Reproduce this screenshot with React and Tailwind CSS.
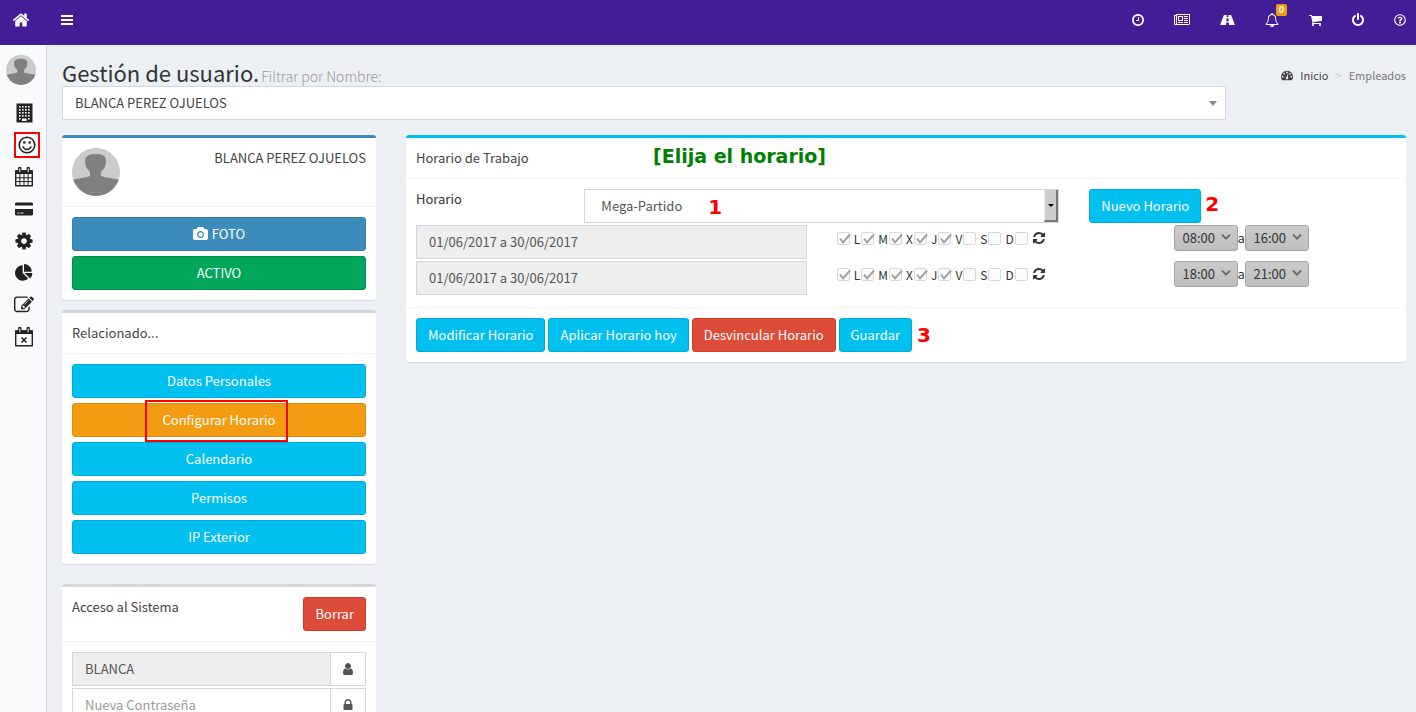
import { useState } from "react";
import { FaRegQuestionCircle } from "react-icons/fa";

const topIcons = [
  {
    name: "Fichajes",
    box: "128 0 1536 1792",
    size: "w-3",
    d: "M1024 544v448q0 14-9 23t-23 9h-320q-14 0-23-9t-9-23v-64q0-14 9-23t23-9h224v-352q0-14 9-23t23-9h64q14 0 23 9t9 23zm416 352q0-148-73-273t-198-198-273-73-273 73-198 198-73 273 73 273 198 198 273 73 273-73 198-198 73-273zm224 0q0 209-103 385.5t-279.5 279.5-385.5 103-385.5-103-279.5-279.5-103-385.5 103-385.5 279.5-279.5 385.5-103 385.5 103 279.5 279.5 103 385.5z",
  },
  {
    name: "Noticias",
    box: "0 0 2048 1792",
    size: "w-4",
    d: "M1024 512h-384v384h384v-384zm128 640v128h-640v-128h640zm0-768v640h-640v-640h640zm640 768v128h-512v-128h512zm0-256v128h-512v-128h512zm0-256v128h-512v-128h512zm0-256v128h-512v-128h512zm-1536 960v-960h-128v960q0 26 19 45t45 19 45-19 19-45zm1664 0v-1088h-1536v1088q0 33-11 64h1483q26 0 45-19t19-45zm128-1216v1216q0 80-56 136t-136 56h-1664q-80 0-136-56t-56-136v-1088h256v-128h1792z",
  },
  {
    name: "Rutas",
    box: "0 0 1920 1792",
    size: "w-[15px]",
    d: "M1111 1025v-4l-24-320q-1-13-11-22.5t-23-9.5h-186q-13 0-23 9.5t-11 22.5l-24 320v4q-1 12 8 20t21 8h244q12 0 21-8t8-20zm759 438q0 73-46 73h-704q13 0 22-9.5t8-22.5l-20-256q-1-13-11-22.5t-23-9.5h-272q-13 0-23 9.5t-11 22.5l-20 256q-1 13 8 22.5t22 9.5h-704q-46 0-46-73 0-54 26-116l417-1044q8-19 26-33t38-14h339q-13 0-23 9.5t-11 22.5l-15 192q-1 14 8 23t22 9h166q13 0 22-9t8-23l-15-192q-1-13-11-22.5t-23-9.5h339q20 0 38 14t26 33l417 1044q26 62 26 116z",
  },
  {
    name: "Avisos",
    box: "0 0 1792 1792",
    size: "w-3.5",
    badge: "0",
    d: "M912 1696q0-16-16-16-59 0-101.5-42.5t-42.5-101.5q0-16-16-16t-16 16q0 73 51.5 124.5t124.5 51.5q16 0 16-16zm-666-288h1300q-266-300-266-832 0-51-24-105t-69-103-121.5-80.5-169.5-31.5-169.5 31.5-121.5 80.5-69 103-24 105q0 532-266 832zm1482 0q0 52-38 90t-90 38h-448q0 106-75 181t-181 75-181-75-75-181h-448q-52 0-90-38t-38-90q50-42 91-88t85-119.5 74.5-158.5 50-206 19.5-260q0-152 117-282.5t307-158.5q-8-19-8-39 0-40 28-68t68-28 68 28 28 68q0 20-8 39 190 28 307 158.5t117 282.5q0 139 19.5 260t50 206 74.5 158.5 85 119.5 91 88z",
  },
  {
    name: "Carrito",
    box: "64 0 1664 1792",
    size: "w-[13px]",
    d: "M704 1536q0 52-38 90t-90 38-90-38-38-90 38-90 90-38 90 38 38 90zm896 0q0 52-38 90t-90 38-90-38-38-90 38-90 90-38 90 38 38 90zm128-1088v512q0 24-16.5 42.5t-40.5 21.5l-1044 122q13 60 13 70 0 16-24 64h920q26 0 45 19t19 45-19 45-45 19h-1024q-26 0-45-19t-19-45q0-11 8-31.5t16-36 21.5-40 15.5-29.5l-177-823h-204q-26 0-45-19t-19-45 19-45 45-19h256q16 0 28.5 6.5t19.5 15.5 13 24.5 8 26 5.5 29.5 4.5 26h1201q26 0 45 19t19 45z",
  },
  {
    name: "Salir",
    box: "128 0 1536 1792",
    size: "w-3",
    d: "M1664 896q0 156-61 298t-164 245-245 164-298 61-298-61-245-164-164-245-61-298q0-182 80.5-343t226.5-270q43-32 95.5-25t83.5 50q32 42 24.5 94.5t-49.5 84.5q-98 74-151.5 181t-53.5 228q0 104 40.5 198.5t109.5 163.5 163.5 109.5 198.5 40.5 198.5-40.5 163.5-109.5 109.5-163.5 40.5-198.5q0-121-53.5-228t-151.5-181q-42-32-49.5-84.5t24.5-94.5q31-43 84-50t95 25q146 109 226.5 270t80.5 343zm-640-768v640q0 52-38 90t-90 38-90-38-38-90v-640q0-52 38-90t90-38 90 38 38 90z",
  },
];

const HOME =
  "M1472 992v480q0 26-19 45t-45 19h-384v-384h-256v384h-384q-26 0-45-19t-19-45v-480q0-1 .5-3t.5-3l575-474 575 474q1 2 1 6zm223-69l-62 74q-8 9-21 11h-3q-13 0-21-7l-692-577-692 577q-12 8-24 7-13-2-21-11l-62-74q-8-10-7-23.5t11-21.5l719-599q32-26 76-26t76 26l244 204v-195q0-14 9-23t23-9h192q14 0 23 9t9 23v408l219 182q10 8 11 21.5t-7 23.5z";
const GAUGE =
  "M384 1152q0-53-37.5-90.5t-90.5-37.5-90.5 37.5-37.5 90.5 37.5 90.5 90.5 37.5 90.5-37.5 37.5-90.5zm192-448q0-53-37.5-90.5t-90.5-37.5-90.5 37.5-37.5 90.5 37.5 90.5 90.5 37.5 90.5-37.5 37.5-90.5zm428 481l101-382q6-26-7.5-48.5t-38.5-29.5-48 6.5-30 39.5l-101 382q-60 5-107 43.5t-63 98.5q-20 77 20 146t117 89 146-20 89-117q16-60-6-117t-72-91zm660-33q0-53-37.5-90.5t-90.5-37.5-90.5 37.5-37.5 90.5 37.5 90.5 90.5 37.5 90.5-37.5 37.5-90.5zm-640-640q0-53-37.5-90.5t-90.5-37.5-90.5 37.5-37.5 90.5 37.5 90.5 90.5 37.5 90.5-37.5 37.5-90.5zm448 192q0-53-37.5-90.5t-90.5-37.5-90.5 37.5-37.5 90.5 37.5 90.5 90.5 37.5 90.5-37.5 37.5-90.5zm320 448q0 261-141 483-19 29-54 29h-1402q-35 0-54-29-141-221-141-483 0-182 71-348t191-286 286-191 348-71 348 71 286 191 191 286 71 348z";
const REFRESH =
  "M1639 1056q0 5-1 7-64 268-268 434.5t-478 166.5q-146 0-282.5-55t-243.5-157l-129 129q-19 19-45 19t-45-19-19-45v-448q0-26 19-45t45-19h448q26 0 45 19t19 45-19 45l-137 137q71 66 161 102t187 36q134 0 250-65t186-179q11-17 53-117 8-23 30-23h192q13 0 22.5 9.5t9.5 22.5zm25-800v448q0 26-19 45t-45 19h-448q-26 0-45-19t-19-45 19-45l138-138q-148-137-349-137-134 0-250 65t-186 179q-11 17-53 117-8 23-30 23h-199q-13 0-22.5-9.5t-9.5-22.5v-7q65-268 270-434.5t480-166.5q146 0 284 55.5t245 156.5l130-129q19-19 45-19t45 19 19 45z";
const CAMERA =
  "M960 672q119 0 203.5 84.5t84.5 203.5-84.5 203.5-203.5 84.5-203.5-84.5-84.5-203.5 84.5-203.5 203.5-84.5zm704-416q106 0 181 75t75 181v896q0 106-75 181t-181 75h-1408q-106 0-181-75t-75-181v-896q0-106 75-181t181-75h224l51-136q19-49 69.5-84.5t103.5-35.5h512q53 0 103.5 35.5t69.5 84.5l51 136h224zm-704 1152q185 0 316.5-131.5t131.5-316.5-131.5-316.5-316.5-131.5-316.5 131.5-131.5 316.5 131.5 316.5 316.5 131.5z";
const USER =
  "M1536 1399q0 109-62.5 187t-150.5 78h-854q-88 0-150.5-78t-62.5-187q0-85 8.5-160.5t31.5-152 58.5-131 94-89 134.5-34.5q131 128 313 128t313-128q76 0 134.5 34.5t94 89 58.5 131 31.5 152 8.5 160.5zm-256-887q0 159-112.5 271.5t-271.5 112.5-271.5-112.5-112.5-271.5 112.5-271.5 271.5-112.5 271.5 112.5 112.5 271.5z";
const LOCK =
  "M640 768h512v-192q0-106-75-181t-181-75-181 75-75 181v192zm832 96v576q0 40-28 68t-68 28h-960q-40 0-68-28t-28-68v-576q0-40 28-68t68-28h32v-192q0-184 132-316t316-132 316 132 132 316v192h32q40 0 68 28t28 68z";
const COG =
  "M1152 896q0-106-75-181t-181-75-181 75-75 181 75 181 181 75 181-75 75-181zm512-109v222q0 12-8 23t-20 13l-185 28q-19 54-39 91 35 50 107 138 10 12 10 25t-9 23q-27 37-99 108t-94 71q-12 0-26-9l-138-108q-44 23-91 38-16 136-29 186-7 28-36 28h-222q-14 0-24.5-8.5t-11.5-21.5l-28-184q-49-16-90-37l-141 107q-10 9-25 9-14 0-25-11-126-114-165-168-7-10-7-23 0-12 8-23 15-21 51-66.5t54-70.5q-27-50-41-99l-183-27q-13-2-21-12.5t-8-23.5v-222q0-12 8-23t19-13l186-28q14-46 39-92-40-57-107-138-10-12-10-24 0-10 9-23 26-36 98.5-107.5t94.5-71.5q13 0 26 10l138 107q44-23 91-38 16-136 29-186 7-28 36-28h222q14 0 24.5 8.5t11.5 21.5l28 184q49 16 90 37l142-107q9-9 24-9 13 0 25 10 129 119 165 170 7 8 7 22 0 12-8 23-15 21-51 66.5t-54 70.5q26 50 41 98l183 28q13 2 21 12.5t8 23.5z";
const PIE =
  "M768 890l546 546q-106 108-247.5 168t-298.5 60q-209 0-385.5-103t-279.5-279.5-103-385.5 103-385.5 279.5-279.5 385.5-103v762zm187 6h773q0 157-60 298.5t-168 247.5zm709-128h-768v-768q209 0 385.5 103t279.5 279.5 103 385.5z";
const EDIT =
  "M888 1184l116-116-152-152-116 116v56h96v96h56zm440-720q-16-16-33 1l-350 350q-17 17-1 33t33-1l350-350q17-17 1-33zm80 594v190q0 119-84.5 203.5t-203.5 84.5h-832q-119 0-203.5-84.5t-84.5-203.5v-832q0-119 84.5-203.5t203.5-84.5h832q63 0 117 25 15 7 18 23 3 17-9 29l-49 49q-14 14-32 8-23-6-45-6h-832q-66 0-113 47t-47 113v832q0 66 47 113t113 47h832q66 0 113-47t47-113v-126q0-13 9-22l64-64q15-15 35-7t20 29zm-96-738l288 288-672 672h-288v-288zm444 132l-92 92-288-288 92-92q28-28 68-28t68 28l152 152q28 28 28 68t-28 68z";

function Glyph({ d, box = "0 0 1792 1792", className = "size-3.5" }) {
  return (
    <svg viewBox={box} className={`shrink-0 ${className}`} fill="currentColor" aria-hidden="true">
      <path d={d} />
    </svg>
  );
}

function BuildingIcon() {
  const cols = [3, 6, 9, 12];
  const rows = [3, 6, 9, 12];
  return (
    <svg viewBox="0 0 17 20" className="h-5 w-[17px]" aria-hidden="true">
      <path d="M0.5 0.5h16v19h-16z" fill="currentColor" />
      {rows.map((y) =>
        cols.map((x) => <rect key={`${x}-${y}`} x={x} y={y} width="1.6" height="1.6" fill="#f9fafc" />)
      )}
      <rect x="3" y="15" width="1.6" height="1.6" fill="#f9fafc" />
      <rect x="12" y="15" width="1.6" height="1.6" fill="#f9fafc" />
      <rect x="6" y="15.5" width="4.6" height="2.5" fill="#f9fafc" />
    </svg>
  );
}

function SmileIcon() {
  return (
    <svg viewBox="0 0 18 18" className="size-[18px]" fill="none" stroke="currentColor" aria-hidden="true">
      <circle cx="9" cy="9" r="7.8" strokeWidth="1.6" />
      <path d="M5 10.8c.7 1.7 2.2 2.7 4 2.7s3.3-1 4-2.7" strokeWidth="1.4" strokeLinecap="round" />
      <circle cx="6.3" cy="6.5" r="1.3" fill="currentColor" stroke="none" />
      <circle cx="11.7" cy="6.5" r="1.3" fill="currentColor" stroke="none" />
    </svg>
  );
}

function CalendarIcon({ crossed }) {
  return (
    <svg viewBox="0 0 18 20" className="h-5 w-[18px]" fill="none" stroke="currentColor" aria-hidden="true">
      <path d="M0.7 4h16.6v14.7H0.7z" strokeWidth="1.4" strokeLinejoin="round" />
      <path d="M0.5 3.5h17V7h-17z" fill="currentColor" stroke="none" />
      <path d="M4.8 1.500v3.500M13.2 1.500v3.500" strokeWidth="3.4" strokeLinecap="round" />
      <path d="M4.8 1.800v3M13.2 1.800v3" stroke="#f9fafc" strokeWidth="1" strokeLinecap="round" />
      {crossed ? (
        <path d="M6.5 10.5l5 5M11.5 10.500l-5 5" strokeWidth="1.6" />
      ) : (
        <path d="M4.9 7v11.500M9 7v11.500M13.1 7v11.500M1 10.800h16M1 14.600h16" strokeWidth="1" />
      )}
    </svg>
  );
}

function CardIcon() {
  return (
    <svg viewBox="0 0 18 14" className="h-3.5 w-[18px]" fill="currentColor" aria-hidden="true">
      <path d="M1.5 0.5h15A1.500 1.500 0 0 1 18 2v1.500H0V2A1.500 1.500 0 0 1 1.500 0.500z" />
      <path d="M0 7h18v5a1.500 1.500 0 0 1-1.500 1.500h-15A1.500 1.500 0 0 1 0 12zM2.500 10.500v1h2v-1zM5.500 10.500v1h3v-1z" fillRule="evenodd" />
    </svg>
  );
}

function Avatar({ className }) {
  return (
    <svg viewBox="0 0 48 48" className={`shrink-0 rounded-full ${className}`} role="img" aria-label="Avatar">
      <path d="M0 0h48v48H0z" fill="#cbcbcb" />
      <path
        d="M24 6c-6 0-11 1.500-11 7 0 5 2 8.500 5 10.500V28c-5 2-11 2-18 4v16h48V32c-7-2-14-2-19-4v-4.500c3-2 5-5.500 5-10.500 0-5.500-4-7-10-7z"
        fill="#808080"
      />
    </svg>
  );
}

const menu = [
  { name: "Empresa", icon: <BuildingIcon /> },
  { name: "Empleados", icon: <SmileIcon />, marked: true },
  { name: "Calendario", icon: <CalendarIcon /> },
  { name: "Tarjetas", icon: <CardIcon /> },
  { name: "Ajustes", icon: <Glyph d={COG} className="size-5" /> },
  { name: "Informes", icon: <Glyph d={PIE} className="size-[18px]" /> },
  { name: "Editar", icon: <Glyph d={EDIT} className="size-5" /> },
  { name: "Ausencias", icon: <CalendarIcon crossed /> },
];

const tones = {
  info: "bg-[#00c0ef] border-[#00acd6]",
  primary: "bg-[#3c8dbc] border-[#367fa9]",
  success: "bg-[#00a65a] border-[#008d4c]",
  warning: "bg-[#f39c12] border-[#e08e0b]",
  danger: "bg-[#dd4b39] border-[#d73925]",
};

function Button({ tone = "info", className = "", children }) {
  return (
    <button
      type="button"
      className={`flex h-[34px] items-center justify-center gap-1 rounded-[3px] border px-[11px] text-white ${tones[tone]} ${className}`}
    >
      {children}
    </button>
  );
}

function Box({ top = "border-[#d2d6de]", children }) {
  return (
    <section className={`rounded-[3px] border-t-[3px] bg-white shadow-[0_1px_1px_rgba(0,0,0,0.1)] ${top}`}>
      {children}
    </section>
  );
}

const days = ["L", "M", "X", "J", "V", "S", "D"];

function DayBox({ label, on }) {
  return (
    <span className="relative flex size-[13px] shrink-0">
      <input
        type="checkbox"
        aria-label={label}
        defaultChecked={on}
        disabled
        className="size-[13px] appearance-none rounded-[2px] border border-[#d8d8d8] bg-[#fbfbfb]"
      />
      {on && (
        <svg viewBox="0 0 14 13" className="pointer-events-none absolute inset-0 size-[14px]" fill="none" aria-hidden="true">
          <path d="M3 6l3 4 7-8" stroke="#a2a2a2" strokeWidth="2" />
        </svg>
      )}
    </span>
  );
}

function TimeSelect({ value, label }) {
  return (
    <span className="relative flex">
      <select
        aria-label={label}
        disabled
        defaultValue={value}
        className="h-[26px] w-16 appearance-none rounded-[3px] border border-[#a5a5a5] bg-linear-to-b from-[#cbcbcb] to-[#bfbfbf] pl-2 text-[13px] text-[#333]"
      >
        <option>{value}</option>
      </select>
      <svg viewBox="0 0 10 6" className="pointer-events-none absolute top-[9px] right-[7px] h-1.5 w-2.5" fill="none" aria-hidden="true">
        <path d="M1 0.7l4 4 4-4" stroke="#666" strokeWidth="1.8" />
      </svg>
    </span>
  );
}

function ScheduleRow({ from, to }) {
  return (
    <div className="grid grid-cols-12 gap-x-[30px]">
      <input
        aria-label="Periodo"
        disabled
        defaultValue="01/06/2017 a 30/06/2017"
        className="col-span-5 h-[34px] min-w-0 border border-[#d2d6de] bg-[#eee] px-3 pb-px text-[#555]"
      />
      <div className="col-span-4 flex h-[26px] items-center">
        {days.map((day, i) => (
          <span key={day} className="flex items-center">
            <DayBox label={`${day} ${from}`} on={i < 5} />
            <span className="mt-0.5 ml-1 pr-px text-[12px]">{day}</span>
          </span>
        ))}
        <DayBox label={`Todos ${from}`} />
        <button type="button" aria-label="Actualizar" className="ml-1">
          <Glyph d={REFRESH} className="size-3.5" />
        </button>
      </div>
      <div className="col-span-3 flex h-[26px] items-center">
        <TimeSelect value={from} label="Desde" />
        <span className="w-[7px]">a</span>
        <TimeSelect value={to} label="Hasta" />
      </div>
    </div>
  );
}

function Mark({ children, className = "" }) {
  return (
    <span className={`font-['DejaVu_Sans',sans-serif] text-[20px] leading-6 font-bold text-[#f00] ${className}`}>
      {children}
    </span>
  );
}

function TopBar() {
  return (
    <header className="flex h-[45px] shrink-0 items-start justify-between bg-[#411e96] pr-2.5 text-white">
      <div className="flex h-10 items-center gap-[30px] pl-3">
        <a href="#inicio" aria-label="Inicio">
          <Glyph d={HOME} className="size-[18px]" />
        </a>
        <button type="button" aria-label="Menú">
          <svg viewBox="0 0 14 14" className="size-3.5" aria-hidden="true">
            <path d="M1 2h12v2H1zM1 6h12v2H1zM1 10h12v2H1z" fill="currentColor" />
          </svg>
        </button>
      </div>
      <nav className="flex h-10 items-center gap-[30px]">
        {topIcons.map((icon) => (
          <a key={icon.name} href="#top" aria-label={icon.name} className="relative">
            <Glyph d={icon.d} box={icon.box} className={`h-3.5 ${icon.size}`} />
            {icon.badge && (
              <span className="absolute -top-[9px] left-[11px] h-3 w-[11px] rounded-[2px] bg-[#f39c12] text-center text-[9px] leading-3 font-bold">
                {icon.badge}
              </span>
            )}
          </a>
        ))}
        <a href="#ayuda" aria-label="Ayuda">
          <FaRegQuestionCircle className="size-3" />
        </a>
      </nav>
    </header>
  );
}

function App() {
  const [employee, setEmployee] = useState("BLANCA PEREZ OJUELOS");

  return (
    <div className="flex h-screen flex-col overflow-hidden bg-[#ecf0f5] font-['Noto_Sans_CJK_SC','Open_Sans',sans-serif] text-[13px] leading-5 text-[#333]">
      <TopBar />
      <div className="flex min-h-0 flex-1">
        <aside className="w-[47px] shrink-0 border-r border-[#d2d6de] bg-[#f9fafc] text-[#222]">
          <Avatar className="mt-2.5 ml-1.5 size-[30px]" />
          <nav className="mt-3 flex flex-col">
            {menu.map((item) => (
              <a
                key={item.name}
                href="#menu"
                aria-label={item.name}
                className={`relative flex h-8 items-center justify-center ${item.marked ? "pl-2" : "pl-0.5"}`}
              >
                {item.icon}
                {item.marked && <span className="absolute inset-y-[3px] left-3.5 w-[26px] border-2 border-[#f00]" />}
              </a>
            ))}
          </nav>
        </aside>

        <main className="min-w-0 flex-1 pr-2.5 pl-[15px]">
          <div className="flex h-[41px] items-end justify-between">
            <h1 className="flex items-baseline gap-0.5 text-[22px] leading-5">
              Gestión de usuario.
              <small className="text-[14px] font-light text-[#999]">Filtrar por Nombre:</small>
            </h1>
            <nav className="flex items-center pb-px text-[11px] text-[#777]">
              <a href="#inicio" className="flex items-center gap-[7px] text-[#444]">
                <Glyph d={GAUGE} className="size-3" />
                Inicio
              </a>
              <span className="px-[7px] text-[#ccc]">&gt;</span>
              <span>Empleados</span>
            </nav>
          </div>
          <div className="relative mr-[180px]">
            <select
              aria-label="Filtrar por Nombre"
              value={employee}
              onChange={(e) => setEmployee(e.target.value)}
              className="block h-[34px] w-full appearance-none border border-[#d2d6de] bg-white px-3 text-[#444]"
            >
              <option>BLANCA PEREZ OJUELOS</option>
            </select>
            <svg viewBox="0 0 8 5" className="pointer-events-none absolute top-[15px] right-[9px] h-[5px] w-2" aria-hidden="true">
              <path d="M0 0h8L4 5z" fill="#888" />
            </svg>
          </div>

          <div className="mt-[15px] grid grid-cols-[minmax(0,314fr)_minmax(0,1000fr)] items-start gap-[30px]">
            <div className="flex flex-col">
              <Box top="border-[#3c8dbc]">
                <div className="flex items-start justify-between border-b border-[#f4f4f4] p-2.5">
                  <Avatar className="size-12" />
                  <h2 className="text-[#444]">BLANCA PEREZ OJUELOS</h2>
                </div>
                <div className="flex flex-col gap-[5px] p-2.5">
                  <Button tone="primary">
                    <Glyph d={CAMERA} box="0 0 1920 1792" className="h-3.5 w-[15px]" />
                    FOTO
                  </Button>
                  <Button tone="success">ACTIVO</Button>
                </div>
              </Box>

              <div className="mt-2.5">
                <Box>
                  <h2 className="border-b border-[#f4f4f4] p-2.5 text-[#444]">Relacionado...</h2>
                  <div className="flex flex-col gap-[5px] p-2.5">
                    <Button>Datos Personales</Button>
                    <div className="relative">
                      <Button tone="warning" className="w-full">Configurar Horario</Button>
                      <span className="pointer-events-none absolute -top-[3px] -bottom-[5px] left-[73px] w-[143px] border-2 border-[#f00]" />
                    </div>
                    <Button>Calendario</Button>
                    <Button>Permisos</Button>
                    <Button>IP Exterior</Button>
                  </div>
                </Box>
              </div>

              <div className="mt-5">
                <Box>
                  <div className="flex items-start justify-between border-b border-[#f4f4f4] p-2.5">
                    <h2 className="text-[#444]">Acceso al Sistema</h2>
                    <Button tone="danger">Borrar</Button>
                  </div>
                  <div className="flex flex-col gap-0.5 p-2.5 text-[#555]">
                    <div className="flex h-[34px] border border-[#d2d6de]">
                      <input aria-label="Usuario" disabled defaultValue="BLANCA" className="min-w-0 flex-1 bg-[#eee] px-3" />
                      <span className="flex w-[35px] items-center justify-center border-l border-[#d2d6de]">
                        <Glyph d={USER} />
                      </span>
                    </div>
                    <div className="flex h-[34px] border border-[#d2d6de]">
                      <input
                        type="password"
                        aria-label="Nueva Contraseña"
                        placeholder="Nueva Contraseña"
                        className="min-w-0 flex-1 px-3 placeholder:text-[#999]"
                      />
                      <span className="flex w-[35px] items-center justify-center border-l border-[#d2d6de]">
                        <Glyph d={LOCK} />
                      </span>
                    </div>
                  </div>
                </Box>
              </div>
            </div>

            <Box top="border-[#00c0ef]">
              <div className="flex items-start border-b border-[#f4f4f4] p-2.5">
                <h2 className="w-[237px] text-[#444]">Horario de Trabajo</h2>
                <p className="font-['DejaVu_Sans',sans-serif] text-[19px] leading-4 font-bold text-[#008000]">[Elija el horario]</p>
              </div>
              <div className="flex flex-col gap-0.5 px-2.5 pt-2.5 pb-3">
                <div className="grid grid-cols-12 gap-x-[30px]">
                  <label htmlFor="horario" className="col-span-2">Horario</label>
                  <div className="relative col-span-6">
                    <select
                      id="horario"
                      className="block h-[34px] w-full appearance-none border border-[#d2d6de] bg-white px-4 text-[#555]"
                    >
                      <option>Mega-Partido</option>
                    </select>
                    <span className="pointer-events-none absolute inset-y-px right-px flex w-3.5 items-center justify-center border-r-2 border-b-2 border-l border-[#777] border-l-[#e8e8e8] bg-[#cdcdcd]">
                      <svg viewBox="0 0 6 3" className="h-[3px] w-1.5" aria-hidden="true">
                        <path d="M0 0h6L3 3z" fill="#000" />
                      </svg>
                    </span>
                    <Mark className="pointer-events-none absolute top-1.5 left-[124px]">1</Mark>
                  </div>
                  <div className="col-span-4 flex gap-1">
                    <Button>Nuevo Horario</Button>
                    <Mark className="pt-[3px]">2</Mark>
                  </div>
                </div>
                <ScheduleRow from="08:00" to="16:00" />
                <ScheduleRow from="18:00" to="21:00" />
              </div>
              <div className="flex items-center gap-[3px] border-t border-[#f4f4f4] p-2.5">
                <Button>Modificar Horario</Button>
                <Button>Aplicar Horario hoy</Button>
                <Button tone="danger">Desvincular Horario</Button>
                <Button>Guardar</Button>
                <Mark className="pl-0.5">3</Mark>
              </div>
            </Box>
          </div>
        </main>
      </div>
    </div>
  );
}

export default App;
